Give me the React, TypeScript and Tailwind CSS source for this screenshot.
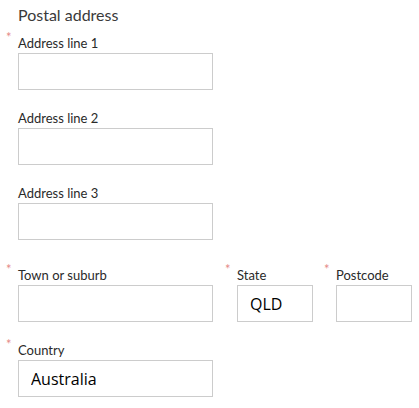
type FieldProps = {
  label: string;
  required?: boolean;
  value?: string;
  width: string;
};

function Field({ label, required, value, width }: FieldProps) {
  return (
    <div className="flex flex-col">
      <label className="relative h-4 text-[13px] leading-4 text-[#2a2a2a]">
        {required && (
          <span className="absolute -left-[12px] -top-[6px] text-[13px] text-[#e58a8a]">
            *
          </span>
        )}
        {label}
      </label>
      <input
        defaultValue={value}
        className={`${width} mt-[2px] h-[37px] border border-[#cccccc] bg-white px-3 text-[16px] text-black outline-none`}
        style={{ fontFamily: "'Open Sans', 'Noto Sans', sans-serif" }}
        type="text"
      />
    </div>
  );
}

export default function App() {
  return (
    <div className="min-h-[408px] w-[419px] bg-white pl-[18px] pt-[5px] font-['Lato',sans-serif]">
      <h2 className="h-5 text-[16px] leading-5 text-[#3a3a3a]">Postal address</h2>

      <div className="mt-[10px] flex flex-col gap-[20px]">
        <Field label="Address line 1" required width="w-[195px]" />
        <Field label="Address line 2" width="w-[195px]" />
        <Field label="Address line 3" width="w-[195px]" />
      </div>

      <div className="mt-[27px] flex">
        <Field label="Town or suburb" required width="w-[195px]" />
        <div className="ml-[24px]">
          <Field label="State" required value="QLD" width="w-[76px]" />
        </div>
        <div className="ml-[23px]">
          <Field label="Postcode" required width="w-[76px]" />
        </div>
      </div>

      <div className="mt-[20px]">
        <Field label="Country" required value="Australia" width="w-[195px]" />
      </div>
    </div>
  );
}
